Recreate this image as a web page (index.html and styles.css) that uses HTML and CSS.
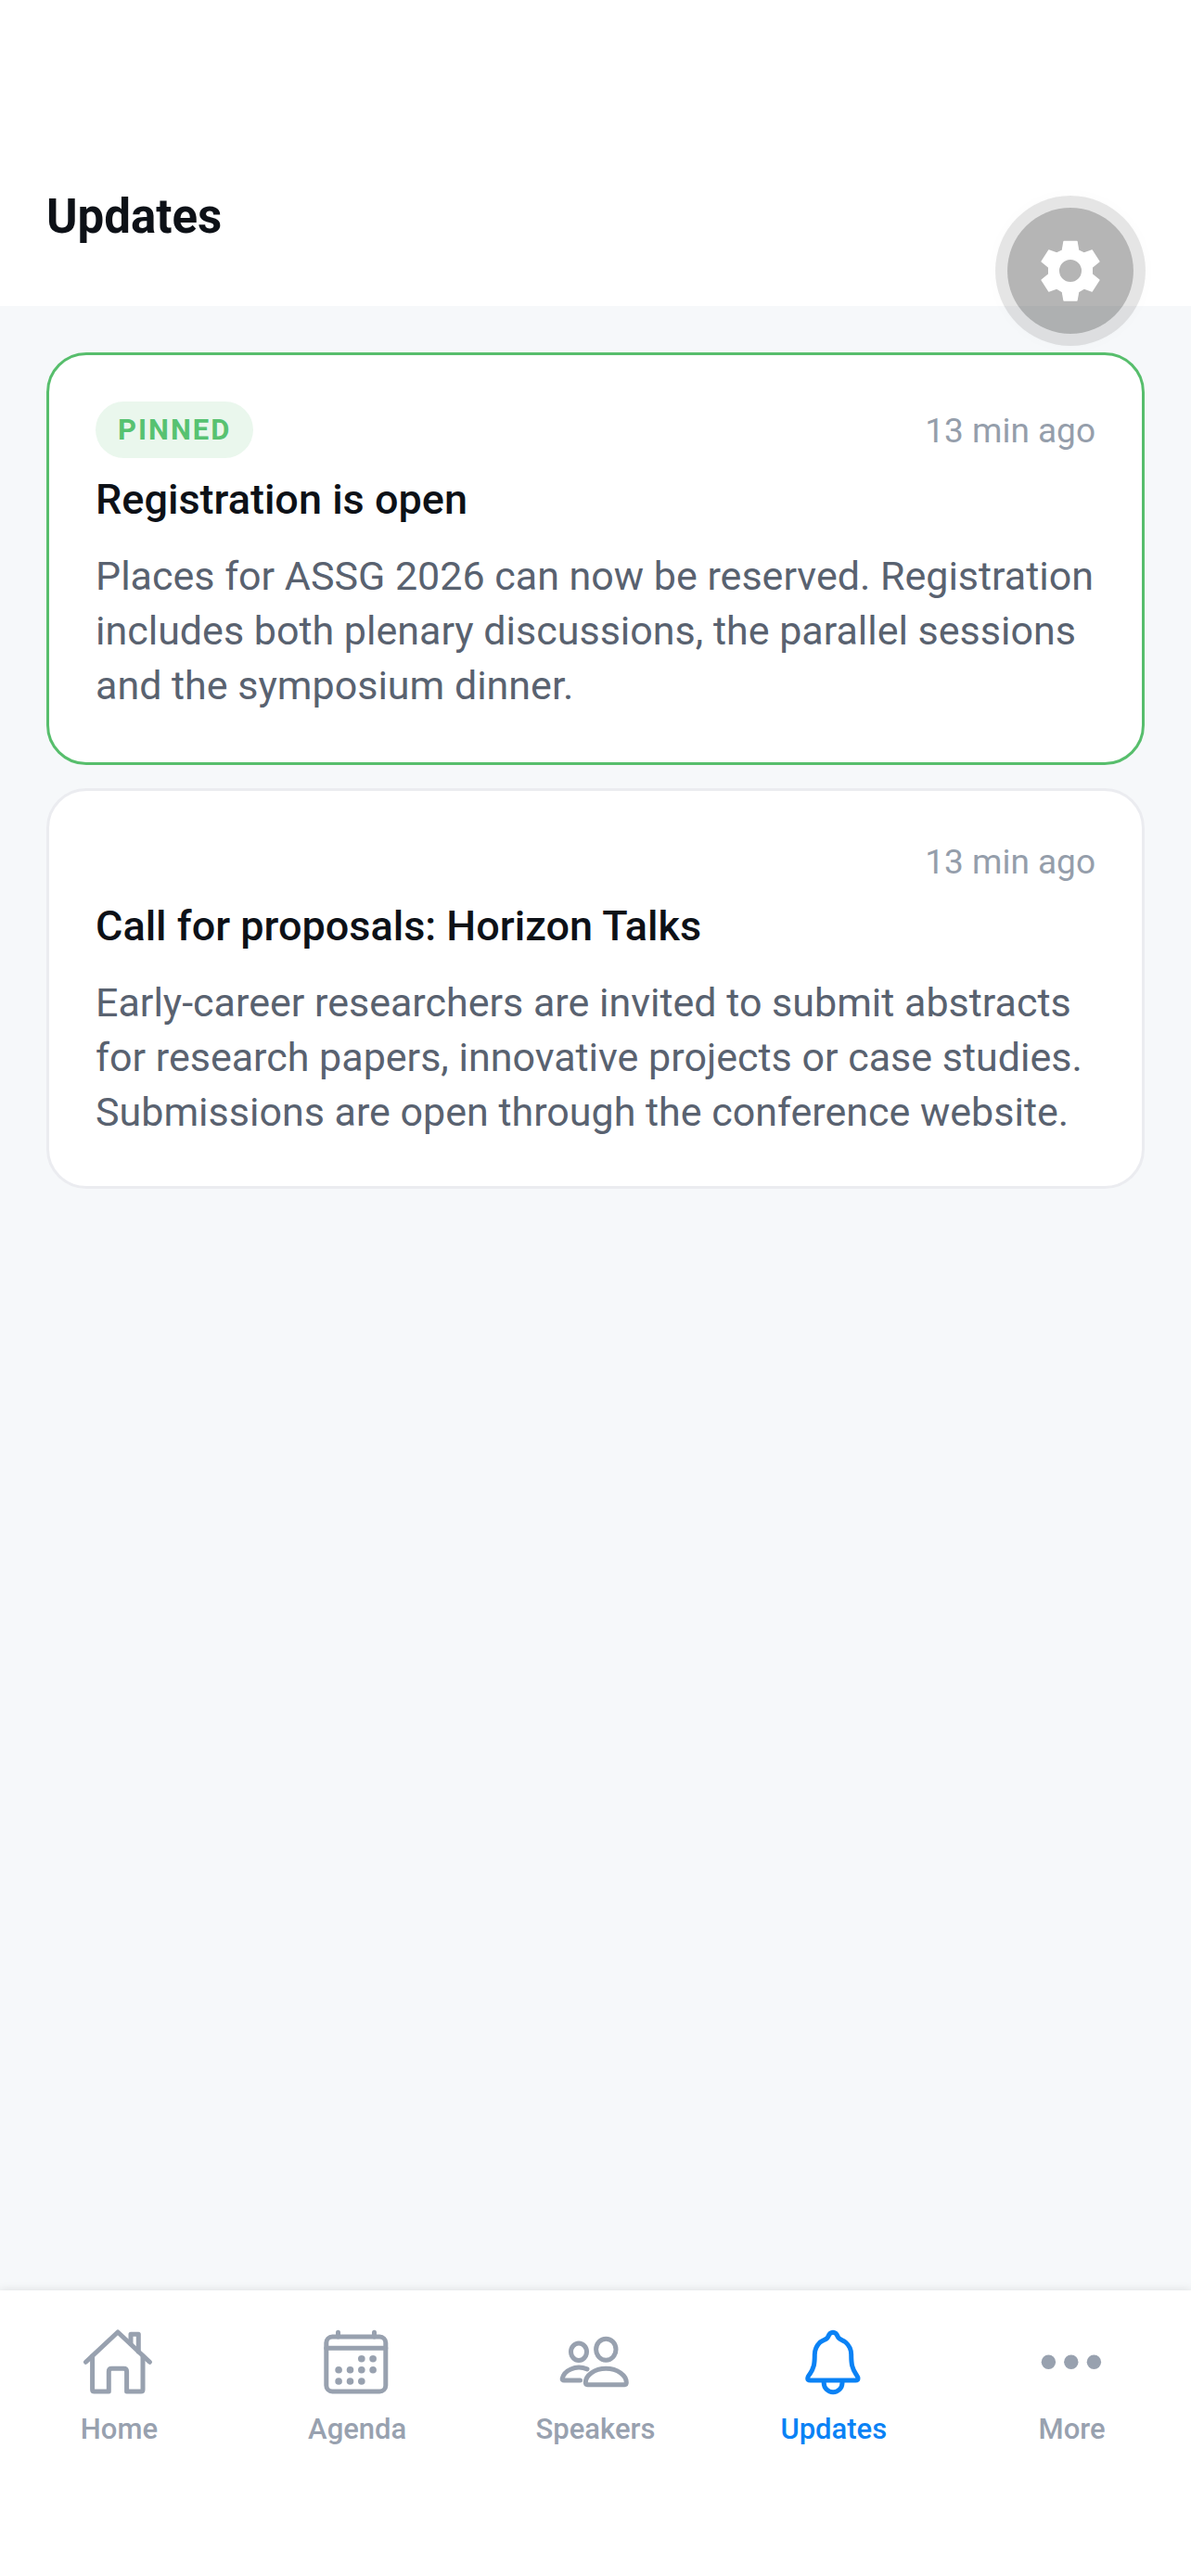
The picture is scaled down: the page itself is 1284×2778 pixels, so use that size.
FILE: index.html
```html
<!DOCTYPE html>
<html lang="en">
<head>
    <meta charset="UTF-8">
    <meta name="viewport" content="width=device-width, initial-scale=1.0">
    <title>Updates</title>
    <link rel="stylesheet" href="styles.css">
</head>
<body>
    <header class="header">
        <h1>Updates</h1>
    </header>

    <button class="settings-btn" aria-label="Settings">
        <svg viewBox="0 0 198 198">
            <path fill-rule="evenodd" d="M78 4H120L125 33L144 42L169 33L192 69L169 88V110L192 129L169 165L144 156L125 167L120 195H78L73 167L54 156L29 165L6 129L29 110V88L6 69L29 33L54 42L73 33ZM99 61A38 38 0 1 0 99 137A38 38 0 1 0 99 61Z"/>
        </svg>
    </button>

    <main class="feed">
        <article class="card card-pinned">
            <div class="card-top">
                <span class="badge">PINNED</span>
                <time class="time">13 min ago</time>
            </div>
            <h2>Registration is open</h2>
            <p>Places for ASSG 2026 can now be reserved. Registration includes both plenary discussions, the parallel sessions and the symposium dinner.</p>
        </article>

        <article class="card">
            <div class="card-top">
                <time class="time">13 min ago</time>
            </div>
            <h2>Call for proposals: Horizon Talks</h2>
            <p>Early-career researchers are invited to submit abstracts for research papers, innovative projects or case studies. Submissions are open through the conference website.</p>
        </article>
    </main>

    <nav class="tabs">
        <a class="tab" href="#home">
            <svg class="icon" viewBox="0 0 72 72">
                <path d="M.5 36.3L35 4L69.4 36.3"/>
                <path d="M7.6 30V66Q7.6 68 9.6 68H25.3V46.5Q25.3 43.3 28.5 43.3H41.4Q44.6 43.3 44.6 46.5V68H60Q62 68 62 66V30"/>
                <path d="M49 16.5V6.3H57.3V25"/>
            </svg>
            <span>Home</span>
        </a>
        <a class="tab" href="#agenda">
            <svg class="icon" viewBox="0 0 72 72">
                <rect x="2.8" y="9" width="64" height="59" rx="6.5"/>
                <path d="M2.8 21.3H66.8M15.5 4.3V9M54.5 4.3V9"/>
                <g class="dots">
                    <circle cx="40.8" cy="32.7" r="3.8"/>
                    <circle cx="53.1" cy="32.7" r="3.8"/>
                    <circle cx="16.1" cy="44.8" r="3.8"/>
                    <circle cx="28.5" cy="44.8" r="3.8"/>
                    <circle cx="40.8" cy="44.8" r="3.8"/>
                    <circle cx="53.1" cy="44.8" r="3.8"/>
                    <circle cx="16.1" cy="57" r="3.8"/>
                    <circle cx="28.5" cy="57" r="3.8"/>
                    <circle cx="40.8" cy="57" r="3.8"/>
                </g>
            </svg>
            <span>Agenda</span>
        </a>
        <a class="tab" href="#speakers">
            <svg class="icon" viewBox="0 0 72 72">
                <ellipse cx="18" cy="25.3" rx="8.5" ry="9.2"/>
                <ellipse cx="47.3" cy="22.7" rx="10.7" ry="11.5"/>
                <path d="M27 43.8C14 39 2 45.5 .2 54.2Q0 56 2 56H19.5"/>
                <path d="M25.3 58.3C25.3 50.7 34.7 43.3 47.3 43.3S69.3 50.7 69.3 58.3Q69.3 60.7 67.3 60.7H27.3Q25.3 60.7 25.3 58.3Z"/>
            </svg>
            <span>Speakers</span>
        </a>
        <a class="tab tab-active" href="#updates" aria-current="page">
            <svg class="icon" viewBox="0 0 72 72">
                <path d="M29.7 9C31 5.7 32.7 4.3 35 4.3S39 5.7 40.3 9C41 11.7 45.7 12.3 48.7 15C53.3 19 54.7 23 54.7 28.3C54.7 39 55.7 43 60 49.7C61.3 51.7 62 52.3 62 53.7Q62 56 59.3 56H10.7Q7.7 56 7.7 53.7C7.7 52.3 8.7 51 10 49.3C14.3 43 15.3 39 15.3 28.3C15.3 23 17 19 21 15C24.3 12.3 29 11.7 29.7 9Z"/>
                <path d="M25.2 57V58.8A9.9 9.9 0 0 0 45 58.8V57"/>
            </svg>
            <span>Updates</span>
        </a>
        <a class="tab" href="#more">
            <svg class="icon" viewBox="0 0 72 72">
                <g class="dots">
                    <circle cx="10.4" cy="36.3" r="7.7"/>
                    <circle cx="34.8" cy="36.3" r="7.7"/>
                    <circle cx="59.4" cy="36.3" r="7.7"/>
                </g>
            </svg>
            <span>More</span>
        </a>
    </nav>
</body>
</html>
```
FILE: styles.css
```css
* {
    box-sizing: border-box;
}

body {
    margin: 0;
    min-height: 100vh;
    display: flex;
    flex-direction: column;
    position: relative;
    background: #f6f8fa;
    font-family: Roboto, sans-serif;
    color: #0d1117;
}

h1, h2, p {
    margin: 0;
}

.header {
    padding: 204px 50px 66px;
    background: #fff;
}

h1 {
    font-size: 51px;
    line-height: 60px;
    font-weight: 700;
}

.settings-btn {
    position: absolute;
    top: 211px;
    right: 49px;
    width: 162px;
    height: 162px;
    padding: 0;
    display: flex;
    align-items: center;
    justify-content: center;
    border: 13px solid rgba(0, 0, 0, 0.1);
    border-radius: 50%;
    background: rgba(0, 0, 0, 0.29);
    background-clip: padding-box;
    box-shadow: 0 0 16px rgba(0, 0, 0, 0.02);
    cursor: pointer;
}

.settings-btn svg {
    width: 66px;
    height: 66px;
    fill: #fff;
    stroke: #fff;
    stroke-width: 4;
    stroke-linejoin: round;
}

.feed {
    flex: 1;
    display: flex;
    flex-direction: column;
    gap: 25px;
    padding: 50px;
}

.card {
    padding: 50px;
    border: 3px solid #ebecf0;
    border-radius: 43px;
    background: #fff;
}

.card-pinned {
    padding-bottom: 53px;
    border-color: #57be6c;
}

.card-top {
    display: flex;
    align-items: center;
    margin-bottom: 15px;
}

.badge {
    padding: 12px 24px;
    border-radius: 31px;
    background: #eaf7ed;
    color: #57c271;
    font-size: 31px;
    line-height: 37px;
    font-weight: 700;
    letter-spacing: 2px;
}

.time {
    margin-left: auto;
    padding-top: 2px;
    color: #959eab;
    font-size: 37px;
    line-height: 49px;
}

h2 {
    margin-bottom: 23px;
    font-size: 45px;
    line-height: 60px;
    font-weight: 500;
}

p {
    color: #596270;
    font-size: 43px;
    line-height: 59px;
}

.tabs {
    display: flex;
    min-height: 308px;
    padding-top: 41px;
    background: #fff;
    box-shadow: 0 -2px 8px rgba(0, 0, 0, 0.08);
}

.tab {
    flex: 1;
    display: flex;
    flex-direction: column;
    align-items: center;
    gap: 19px;
    color: #98a1af;
    font-size: 31px;
    line-height: 36px;
    font-weight: 500;
    text-decoration: none;
}

.tab-active {
    color: #0a82f5;
}

.icon {
    width: 72px;
    height: 72px;
    overflow: visible;
    fill: none;
    stroke: currentColor;
    stroke-width: 5;
    stroke-linecap: round;
    stroke-linejoin: round;
}

.dots {
    fill: currentColor;
    stroke: none;
}
```
